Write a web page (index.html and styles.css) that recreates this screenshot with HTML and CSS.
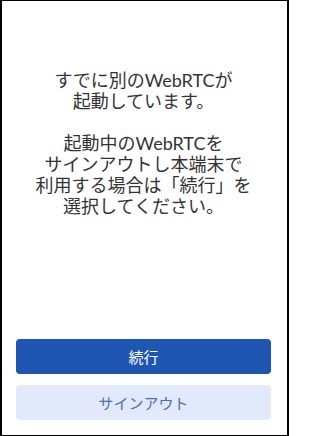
FILE: index.html
```html
<!DOCTYPE html>
<html lang="ja">
<head>
<meta charset="utf-8">
<link rel="stylesheet" href="styles.css">
</head>
<body>
<div class="dialog">
  <p class="message">すでに別のWebRTCが<br>起動しています。<br><br>起動中のWebRTCを<br>サインアウトし本端末で<br>利用する場合は「続行」を<br>選択してください。</p>
  <div class="actions">
    <button class="btn btn-primary">続行</button>
    <button class="btn btn-secondary">サインアウト</button>
  </div>
</div>
</body>
</html>
```
FILE: styles.css
```css
html, body {
  margin: 0;
  padding: 0;
  background: #ffffff;
}
.dialog {
  box-sizing: border-box;
  width: 289px;
  height: 436px;
  border-style: solid;
  border-color: #000;
  border-width: 1px 2px 1px 2px;
  display: flex;
  flex-direction: column;
  padding: 69px 16px 15px 14px;
  font-family: Lato, "Noto Sans CJK JP", sans-serif;
}
.message {
  margin: 0;
  text-align: center;
  font-size: 18px;
  line-height: 21px;
  color: #333333;
}
.actions {
  margin-top: auto;
  display: flex;
  flex-direction: column;
  gap: 11px;
}
.btn {
  height: 35px;
  border: none;
  border-radius: 4px;
  font-family: Lato, "Noto Sans CJK JP", sans-serif;
  font-size: 15px;
  padding: 0;
  width: 100%;
}
.btn-primary {
  background: #1f56b1;
  color: #ffffff;
}
.btn-secondary {
  background: #e2e9fb;
  color: #4d6fb7;
}
```
